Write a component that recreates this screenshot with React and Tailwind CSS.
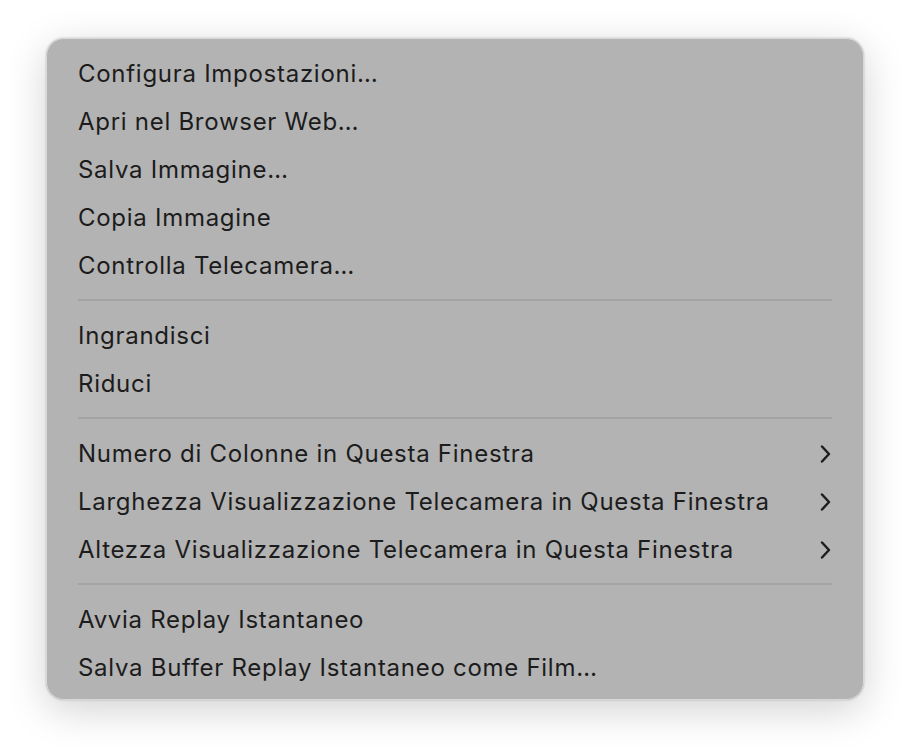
import React from 'react';

const groups = [
  [
    { label: 'Configura Impostazioni…' },
    { label: 'Apri nel Browser Web…' },
    { label: 'Salva Immagine…' },
    { label: 'Copia Immagine' },
    { label: 'Controlla Telecamera…' },
  ],
  [{ label: 'Ingrandisci' }, { label: 'Riduci' }],
  [
    { label: 'Numero di Colonne in Questa Finestra', sub: true },
    { label: 'Larghezza Visualizzazione Telecamera in Questa Finestra', sub: true },
    { label: 'Altezza Visualizzazione Telecamera in Questa Finestra', sub: true },
  ],
  [
    { label: 'Avvia Replay Istantaneo' },
    { label: 'Salva Buffer Replay Istantaneo come Film…' },
  ],
];

const Chevron = () => (
  <svg width="14" height="20" viewBox="0 0 14 20" fill="none" className="shrink-0">
    <path d="M4 2.5 L11 10 L4 17.5" stroke="#1e1e1e" strokeWidth="2.5" strokeLinecap="round" strokeLinejoin="round" />
  </svg>
);

export default function App() {
  return (
    <div className="w-[910px] h-[754px] bg-white pt-[38px] pl-[46px]">
      <div
        className="w-[818px] rounded-[18px] bg-[#b3b3b3] border border-[#d9d9d9] pt-[10px] pb-[8px] px-[31px] shadow-[0_10px_40px_rgba(0,0,0,0.18),0_0_2px_rgba(0,0,0,0.25)] text-[#1c1c1c]"
        style={{ fontFamily: 'Inter, "Noto Sans", sans-serif' }}
      >
        {groups.map((g, gi) => (
          <div key={gi}>
            {gi > 0 && (
              <div className="h-[22px] flex items-center">
                <div className="w-full h-[2px] bg-[#a3a3a3]" />
              </div>
            )}
            {g.map((it) => (
              <div key={it.label} className="h-[48px] flex items-center justify-between pt-[1px]">
                <span className="text-[24px] tracking-[0.72px]">{it.label}</span>
                {it.sub && <Chevron />}
              </div>
            ))}
          </div>
        ))}
      </div>
    </div>
  );
}
